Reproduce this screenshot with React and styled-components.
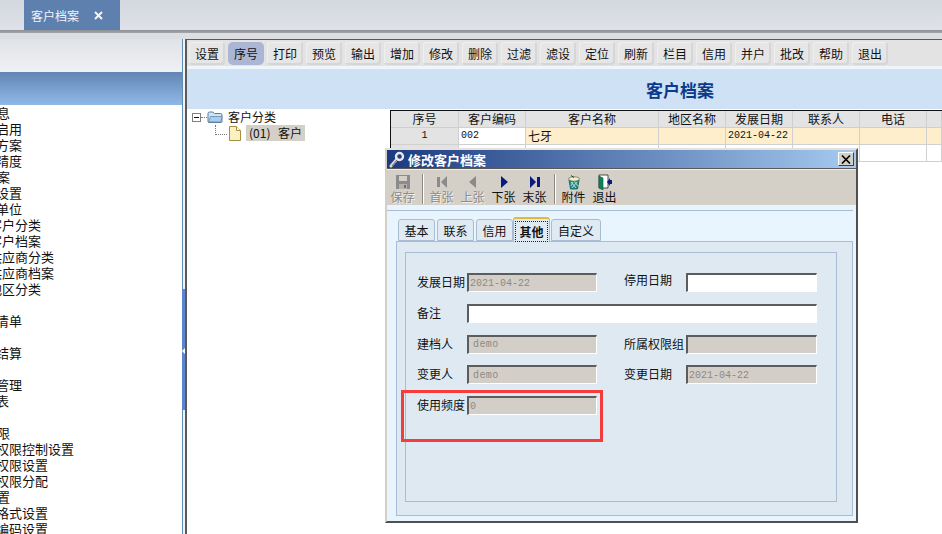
import React from 'react'
import styled, { createGlobalStyle } from 'styled-components'

const GlobalStyle = createGlobalStyle`
    html, body {
        margin: 0;
        padding: 0;
        background: #fff;
    }
    * {
        box-sizing: border-box;
    }
    body {
        font-family: "Noto Sans CJK SC", "Liberation Sans", sans-serif;
        font-size: 12px;
        color: #111;
    }
`

const Page = styled.div`
    position: relative;
    width: 942px;
    height: 534px;
    overflow: hidden;
    display: flex;
    flex-direction: column;
    background: #fff;
`

const TopBar = styled.div`
    height: 30px;
    flex: none;
    padding-left: 24px;
    background: linear-gradient(#d3d7de, #dfe2e7);
`

const TopTab = styled.div`
    width: 96px;
    height: 30px;
    display: flex;
    align-items: center;
    padding-left: 7px;
    gap: 15px;
    background: #5d80ae;
    color: #f2f5fa;
    font-size: 12px;
`

const TopRule = styled.div`
    height: 9px;
    flex: none;
    background: linear-gradient(#8b8e92 0, #a4a7aa 3px, #dcdee2 3px, #dcdee2 100%);
`

const Main = styled.div`
    flex: 1;
    display: flex;
    min-height: 0;
`

const LeftPanel = styled.div`
    width: 182px;
    flex: none;
    display: flex;
    flex-direction: column;
`

const LeftHead = styled.div`
    height: 33px;
    flex: none;
    background: linear-gradient(#dfe2e7, #f0f1f4);
`

const LeftBand = styled.div`
    height: 33px;
    flex: none;
    background: linear-gradient(#6385b3, #90b9e8);
`

const NavList = styled.div`
    flex: 1;
    overflow: hidden;
`

const NavInner = styled.div`
    margin-left: -42px;
    width: 240px;
`

const NavRow = styled.div`
    height: 16px;
    line-height: 16px;
    font-size: 13px;
    white-space: nowrap;
    padding-left: ${p => [0, 12, 31][p.$level]}px;
`

const Splitter = styled.div`
    width: 3px;
    flex: none;
    display: flex;
    flex-direction: column;
    background: linear-gradient(90deg, #5f8db8 0, #5f8db8 1px, #f2f2f2 1px);
`

const SplitHandle = styled.div`
    position: relative;
    height: 121px;
    margin-top: 250px;
    width: 3px;
    background: #5c87d0;

    &::after {
        content: "";
        position: absolute;
        left: 0;
        top: 59px;
        border-style: solid;
        border-width: 3px 3px 3px 0;
        border-color: transparent #fff transparent transparent;
    }
`

const RightPanel = styled.div`
    flex: 1;
    min-width: 0;
    display: flex;
    flex-direction: column;
    border-left: 2px solid #5a5a5a;
    border-top: 1px solid #5a5a5a;
`

const Toolbar = styled.div`
    height: 26px;
    flex: none;
    display: flex;
    gap: 3px;
    padding: 2px 0 0 2px;
    background: #e3e3e3;
`

const ToolButton = styled.div`
    width: 36px;
    height: 23px;
    flex: none;
    display: flex;
    align-items: center;
    justify-content: center;
    font-size: 12px;
    border-radius: ${p => (p.$active ? 5 : 3)}px;
    background: ${p => (p.$active ? '#aab6d3' : '#e6e6e6')};
    box-shadow: ${p => (p.$active ? 'none' : 'inset -2px -2px 0 #d6d6d6, inset 1px 1px 0 #efefef')};
`

const ToolGap = styled.div`
    height: 3px;
    flex: none;
    background: #eef5fb;
`

const TitleBand = styled.div`
    height: 40px;
    flex: none;
    display: flex;
    align-items: center;
    justify-content: center;
    padding-left: 231px;
    background: #cfe2f5;
    color: #0b3a8c;
    font-size: 17px;
    font-weight: 700;
`

const Content = styled.div`
    flex: 1;
    display: flex;
    min-height: 0;
`

const TreePane = styled.div`
    width: 203px;
    flex: none;
    padding: 0 0 0 5px;
`

const TreeRow = styled.div`
    height: 16px;
    display: flex;
    align-items: center;
`

const ExpandBox = styled.div`
    width: 9px;
    height: 9px;
    flex: none;
    display: flex;
    align-items: center;
    justify-content: center;
    border: 1px solid #808080;
    background: #fff;

    &::after {
        content: "";
        width: 5px;
        height: 1px;
        background: #111;
    }
`

const DotLine = styled.div`
    width: ${p => p.$w}px;
    height: 1px;
    flex: none;
    border-top: 1px dotted #777;
`

const DotElbow = styled.div`
    width: 12px;
    height: 10px;
    flex: none;
    margin: -6px 2px 0 23px;
    border-left: 1px dotted #777;
    border-bottom: 1px dotted #777;
`

const TreeLabel = styled.span`
    margin-left: ${p => p.$ml}px;
    font-size: 12px;
    line-height: 16px;
    padding: 0 ${p => (p.$selected ? 3 : 0)}px;
    word-spacing: ${p => (p.$selected ? 5 : 0)}px;
    background: ${p => (p.$selected ? '#d4d0c8' : 'transparent')};
`

const DataGrid = styled.div`
    flex: 1;
    align-self: flex-start;
    display: grid;
    grid-template-columns: 68px 67px 133px 67px 67px 67px 67px 1fr;
    grid-auto-rows: 17px;
    border-top: 1px solid #111;
    border-left: 1px solid #111;
    margin-top: 1px;
`

const HeadCell = styled.div`
    display: flex;
    align-items: center;
    justify-content: center;
    padding-bottom: 2px;
    background: #e3e3e3;
    border-right: 1px solid #cfcfcf;
    border-bottom: 1px solid #cfcfcf;
    font-size: 12px;
`

const Cell = styled.div`
    display: flex;
    align-items: center;
    justify-content: ${p => (p.$center ? 'center' : 'flex-start')};
    padding: 0 0 2px ${p => (p.$center ? 0 : 2)}px;
    background: ${p => p.$bg || '#fff'};
    border-right: 1px solid #d0d0d0;
    border-bottom: 1px solid #d0d0d0;
    font-size: 12px;
`

const Mono = styled.span`
    font-family: "Liberation Mono", monospace;
    font-size: 10px;
`

const Dialog = styled.div`
    position: absolute;
    left: 385px;
    top: 148px;
    width: 473px;
    height: 375px;
    display: flex;
    flex-direction: column;
    border-style: solid;
    border-width: 2px;
    border-color: #e4e2dc #505050 #505050 #d4d0c8;
    background: #d4d0c8;
`

const DialogTitle = styled.div`
    height: 18px;
    flex: none;
    display: flex;
    align-items: center;
    gap: 3px;
    padding: 0 2px 0 2px;
    background: linear-gradient(90deg, #1c3a80, #a6caf0);
    color: #fff;
    font-size: 13px;
    font-weight: 700;
`

const CloseButton = styled.div`
    width: 16px;
    height: 14px;
    margin-left: auto;
    display: flex;
    align-items: center;
    justify-content: center;
    background: #d4d0c8;
    border: 1px solid;
    border-color: #fff #404040 #404040 #fff;
`

const TitleRule = styled.div`
    height: 2px;
    flex: none;
    background: linear-gradient(#5a5a5a 50%, #f0eeea 50%);
`

const DialogTools = styled.div`
    height: 35px;
    flex: none;
    display: flex;
    align-items: flex-start;
    padding-top: 4px;
`

const DialogTool = styled.div`
    width: 31px;
    flex: none;
    display: flex;
    flex-direction: column;
    align-items: center;
    font-size: 12px;
    line-height: 14px;
    color: ${p => (p.$disabled ? '#8b8b8b' : '#111')};
    text-shadow: ${p => (p.$disabled ? '1px 1px 0 #f2f0ec' : 'none')};

    svg {
        display: block;
    }
`

const ToolSep = styled.div`
    width: 2px;
    height: 30px;
    flex: none;
    margin: 0 2px 0 4px;
    background: linear-gradient(90deg, #8c8a84 50%, #fff 50%);
`

const DialogBody = styled.div`
    flex: 1;
    min-height: 0;
    display: flex;
    flex-direction: column;
    padding-top: 5px;
    background: #e8f4fe;
`

const BodyRule = styled.div`
    height: 1px;
    flex: none;
    margin-right: 3px;
    background: #a8bdd4;
`

const TabStrip = styled.div`
    height: 24px;
    flex: none;
    display: flex;
    align-items: flex-end;
    margin-top: 6px;
    padding-left: 11px;
    position: relative;
    z-index: 1;
`

const Tab = styled.div`
    width: ${p => p.$w}px;
    height: ${p => (p.$active ? 25 : 22)}px;
    margin-left: ${p => (p.$active ? -2 : 0)}px;
    margin-right: ${p => (p.$active ? 1 : 2)}px;
    margin-bottom: ${p => (p.$active ? -1 : 0)}px;
    display: flex;
    align-items: center;
    justify-content: center;
    font-size: 12px;
    font-weight: ${p => (p.$active ? 700 : 400)};
    background: #e0eaf3;
    border: 1px solid #a8bdd4;
    border-bottom: ${p => (p.$active ? 'none' : '1px solid #a8bdd4')};
    border-top: ${p => (p.$active ? '2px solid #e2b93b' : '1px solid #a8bdd4')};
    border-radius: 3px 3px 0 0;
`

const TabFocus = styled.span`
    display: block;
    padding: 2px 3px;
    margin-bottom: -1px;
    border: 1px dotted #222;
    line-height: 15px;
`

const TabPanel = styled.div`
    width: 457px;
    height: 275px;
    flex: none;
    margin-left: 9px;
    padding: 10px 0 0 8px;
    background: #dfe9f2;
    border: 1px solid #a8bdd4;
`

const GroupBox = styled.div`
    width: 432px;
    height: 250px;
    padding: 20px 0 0 11px;
    border: 1px solid #a8bdd4;
`

const FormGrid = styled.div`
    display: grid;
    grid-template-columns: 50px 130px 89px 131px;
    grid-auto-rows: 19px;
    row-gap: 11.75px;
`

const FieldLabel = styled.div`
    display: flex;
    align-items: center;
    padding: 0 0 2px ${p => (p.$right ? 27 : 0)}px;
    margin-top: ${p => (p.$up ? -4 : 0)}px;
    font-size: 12px;
    white-space: nowrap;
`

const Field = styled.div`
    display: flex;
    align-items: center;
    grid-column: ${p => (p.$wide ? 'span 3' : 'auto')};
    padding-left: ${p => (p.$text ? 4 : 1)}px;
    font-family: "Liberation Mono", monospace;
    font-size: 10px;
    letter-spacing: ${p => (p.$text ? 0.4 : 0)}px;
    color: #8c8a86;
    background: ${p => (p.$editable ? '#fff' : '#d3cfc8')};
    border-style: solid;
    border-width: 2px 1px 1px 2px;
    border-color: #5c5c5c #fff #fff #5c5c5c;
`

const Highlight = styled.div`
    position: absolute;
    left: 14px;
    top: 240px;
    width: 202px;
    height: 52px;
    border: 3px solid #f43c3c;
    pointer-events: none;
`

const navRows = [
    [0, '基本信息'], [1, '系统启用'], [1, '编码方案'], [1, '数据精度'], [0, '基础档案'],
    [1, '分类设置'], [1, '计量单位'], [2, '客户分类'], [2, '客户档案'], [2, '供应商分类'],
    [2, '供应商档案'], [2, '地区分类'], [0, ''], [1, '存货清单'], [0, ''],
    [1, '收付结算'], [0, ''], [1, '仓库管理'], [1, '明细表'], [0, ''],
    [0, '系统权限'], [1, '数据权限控制设置'], [1, '数据权限设置'], [1, '金额权限分配'], [0, '单据设置'],
    [1, '单据格式设置'], [1, '单据编码设置'],
]

const toolNames = ['设置', '序号', '打印', '预览', '输出', '增加', '修改', '删除', '过滤', '滤设', '定位', '刷新', '栏目', '信用', '并户', '批改', '帮助', '退出']
const headers = ['序号', '客户编码', '客户名称', '地区名称', '发展日期', '联系人', '电话', '']

const Ico = ({ children, size = 16 }) => (
    <svg width={size} height={size} viewBox="0 0 16 16">{children}</svg>
)

const SaveIcon = () => (
    <Ico>
        <path d="M1 1h14v14H1z" fill="#8b8b8b" />
        <path d="M4 2h8v5H4z" fill="#d4d0c8" />
        <path d="M4 10h8v5H4z" fill="#b5b2ab" />
        <path d="M9 11h2v3H9z" fill="#6f6f6f" />
    </Ico>
)

const FirstIcon = () => (
    <Ico>
        <path d="M3 3h3v10H3zM13 2v12L7 8z" fill="#8b8b8b" />
    </Ico>
)

const PrevIcon = () => (
    <Ico><path d="M11 2v12L4 8z" fill="#8b8b8b" /></Ico>
)

const NextIcon = () => (
    <Ico><path d="M5 2v12l7-6z" fill="#0a1a80" /></Ico>
)

const LastIcon = () => (
    <Ico>
        <path d="M3 2v12l6-6zM10 3h3v10h-3z" fill="#0a1a80" />
    </Ico>
)

const AttachIcon = () => (
    <Ico>
        <path d="M3 6h10l-1.5 9h-7z" fill="#1f8d8a" stroke="#0d4f4f" strokeWidth="0.7" />
        <path d="M5 8l5 6M8 7l4 5M11 8l-5 6M7 8l-2 4" stroke="#d5efe9" strokeWidth="0.8" />
        <ellipse cx="8" cy="5" rx="5.5" ry="2.2" fill="#f2efc4" stroke="#4d6b50" strokeWidth="0.7" />
        <path d="M5 1.5l3 2" stroke="#333" strokeWidth="1" />
    </Ico>
)

const ExitIcon = () => (
    <Ico>
        <path d="M2 1h9v13H2z" fill="#fff" stroke="#222" strokeWidth="0.8" />
        <path d="M2 2l4 2v12l-4-2z" fill="#0f7f62" stroke="#063" strokeWidth="0.6" />
        <path d="M15 6v4h-2v2l-3-4 3-4v2z" fill="#0a1a80" />
    </Ico>
)

const KeyIcon = () => (
    <svg width="16" height="17" viewBox="0 0 16 17">
        <path d="M8 8L2 15" stroke="#d8d8d8" strokeWidth="3" strokeLinecap="round" />
        <circle cx="10.5" cy="5.5" r="3.5" fill="none" stroke="#e8e8e8" strokeWidth="2.4" />
        <path d="M8 9l-5 6" stroke="#666" strokeWidth="1" />
    </svg>
)

const FolderIcon = () => (
    <svg width="16" height="14" viewBox="0 0 16 14">
        <path d="M1 3.5Q1 2 2.5 2H6l1.5 1.5h6Q15 3.5 15 5v6.5q0 1-1 1H2q-1 0-1-1z" fill="#cfe3f6" stroke="#5e7f9f" />
        <path d="M1.5 12L3.5 6.5h11.500L14 12z" fill="#a9cdee" stroke="#5e7f9f" strokeWidth="0.7" />
    </svg>
)

const FileIcon = () => (
    <svg width="12" height="15" viewBox="0 0 12 15">
        <path d="M.5.5h7l4 4v10H.5z" fill="#fdf0c0" stroke="#a58f45" />
        <path d="M7.500.5v4h4" fill="#fff" stroke="#a58f45" />
    </svg>
)

const CloseGlyph = () => (
    <svg width="10" height="9" viewBox="0 0 10 9">
        <path d="M1 .5l8 8M9 .5l-8 8" stroke="#000" strokeWidth="1.6" />
    </svg>
)

const TabX = () => (
    <svg width="9" height="9" viewBox="0 0 9 9">
        <path d="M1 1l7 7M8 1L1 8" stroke="#f2f5fa" strokeWidth="2" />
    </svg>
)

export default function App() {
    return (
        <Page>
            <GlobalStyle />
            <TopBar>
                <TopTab>客户档案<TabX /></TopTab>
            </TopBar>
            <TopRule />
            <Main>
                <LeftPanel>
                    <LeftHead />
                    <LeftBand />
                    <NavList>
                        <NavInner>
                            {navRows.map(([level, text], i) => (
                                <NavRow key={i} $level={level}>{text}</NavRow>
                            ))}
                        </NavInner>
                    </NavList>
                </LeftPanel>
                <Splitter>
                    <SplitHandle />
                </Splitter>
                <RightPanel>
                    <Toolbar>
                        {toolNames.map(name => (
                            <ToolButton key={name} $active={name === '序号'}>{name}</ToolButton>
                        ))}
                    </Toolbar>
                    <ToolGap />
                    <TitleBand>客户档案</TitleBand>
                    <Content>
                        <TreePane>
                            <TreeRow>
                                <ExpandBox />
                                <DotLine $w={6} />
                                <FolderIcon />
                                <TreeLabel $ml={5}>客户分类</TreeLabel>
                            </TreeRow>
                            <TreeRow>
                                <DotElbow />
                                <FileIcon />
                                <TreeLabel $ml={5} $selected>(01) 客户</TreeLabel>
                            </TreeRow>
                        </TreePane>
                        <DataGrid>
                            {headers.map((h, i) => <HeadCell key={i}>{h}</HeadCell>)}
                            <Cell $center $bg="#e3e3e3"><Mono>1</Mono></Cell>
                            <Cell><Mono>002</Mono></Cell>
                            <Cell $bg="#ffeecb">七牙</Cell>
                            <Cell $bg="#ffeecb" />
                            <Cell $bg="#ffeecb"><Mono>2021-04-22</Mono></Cell>
                            <Cell $bg="#ffeecb" />
                            <Cell $bg="#ffeecb" />
                            <Cell $bg="#ffeecb" />
                            <Cell $bg="#e3e3e3" />
                            <Cell />
                            <Cell />
                            <Cell />
                            <Cell />
                            <Cell />
                            <Cell />
                            <Cell />
                        </DataGrid>
                    </Content>
                </RightPanel>
            </Main>

            <Dialog>
                <DialogTitle>
                    <KeyIcon />
                    修改客户档案
                    <CloseButton><CloseGlyph /></CloseButton>
                </DialogTitle>
                <TitleRule />
                <DialogTools>
                    <DialogTool $disabled><SaveIcon />保存</DialogTool>
                    <ToolSep />
                    <DialogTool $disabled><FirstIcon />首张</DialogTool>
                    <DialogTool $disabled><PrevIcon />上张</DialogTool>
                    <DialogTool><NextIcon />下张</DialogTool>
                    <DialogTool><LastIcon />末张</DialogTool>
                    <ToolSep />
                    <DialogTool><AttachIcon />附件</DialogTool>
                    <DialogTool><ExitIcon />退出</DialogTool>
                </DialogTools>
                <DialogBody>
                    <BodyRule />
                    <TabStrip>
                        <Tab $w={37}>基本</Tab>
                        <Tab $w={37}>联系</Tab>
                        <Tab $w={37}>信用</Tab>
                        <Tab $w={37} $active><TabFocus>其他</TabFocus></Tab>
                        <Tab $w={50}>自定义</Tab>
                    </TabStrip>
                    <TabPanel>
                        <GroupBox>
                            <FormGrid>
                                <FieldLabel>发展日期</FieldLabel>
                                <Field>2021-04-22</Field>
                                <FieldLabel $right $up>停用日期</FieldLabel>
                                <Field $editable />
                                <FieldLabel>备注</FieldLabel>
                                <Field $wide $editable />
                                <FieldLabel>建档人</FieldLabel>
                                <Field $text>demo</Field>
                                <FieldLabel $right>所属权限组</FieldLabel>
                                <Field />
                                <FieldLabel>变更人</FieldLabel>
                                <Field $text>demo</Field>
                                <FieldLabel $right>变更日期</FieldLabel>
                                <Field>2021-04-22</Field>
                                <FieldLabel>使用频度</FieldLabel>
                                <Field>0</Field>
                            </FormGrid>
                        </GroupBox>
                    </TabPanel>
                </DialogBody>
                <Highlight />
            </Dialog>
        </Page>
    )
}
